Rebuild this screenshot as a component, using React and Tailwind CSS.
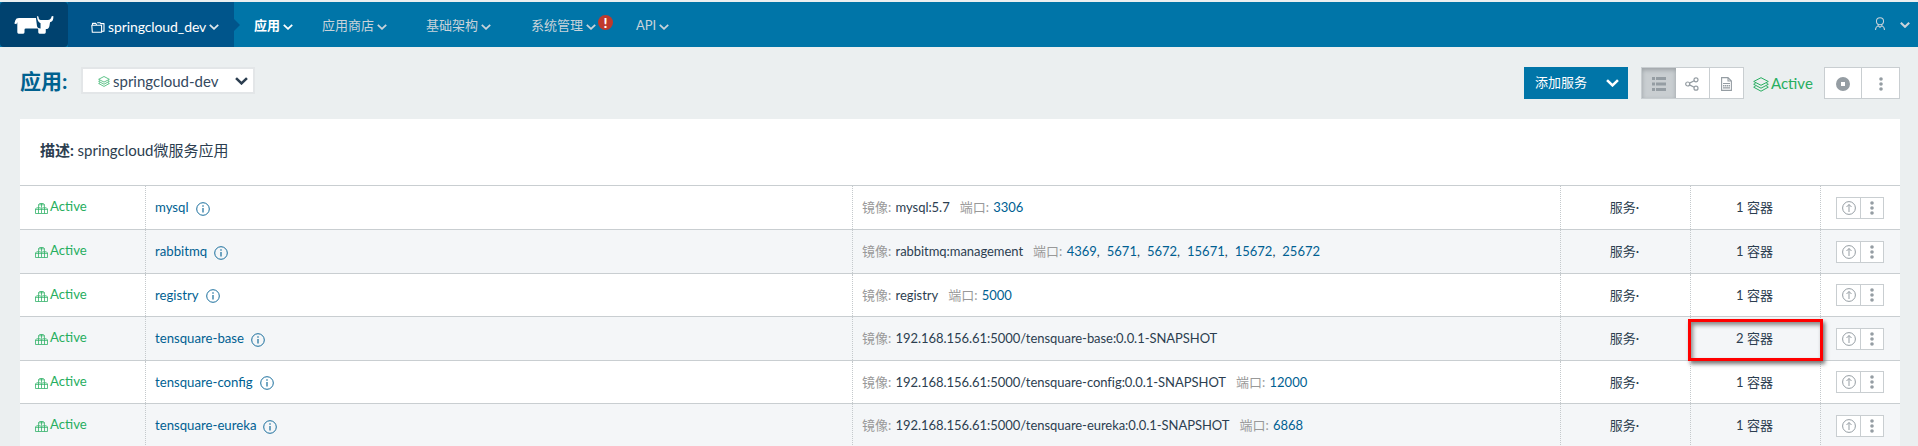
const UI = "font-['Lato','Noto_Sans_CJK_SC',sans-serif]";

const rows = [
  { name: "mysql", image: "mysql:5.7", ports: ["3306"], count: 1, h: "h-[44px]" },
  { name: "rabbitmq", image: "rabbitmq:management", ports: ["4369", "5671", "5672", "15671", "15672", "25672"], count: 1, h: "h-[44px]" },
  { name: "registry", image: "registry", ports: ["5000"], count: 1, h: "h-[43px]" },
  { name: "tensquare-base", image: "192.168.156.61:5000/tensquare-base:0.0.1-SNAPSHOT", ports: [], count: 2, h: "h-[44px]" },
  { name: "tensquare-config", image: "192.168.156.61:5000/tensquare-config:0.0.1-SNAPSHOT", ports: ["12000"], count: 1, h: "h-[43px]" },
  { name: "tensquare-eureka", image: "192.168.156.61:5000/tensquare-eureka:0.0.1-SNAPSHOT", ports: ["6868"], count: 1, h: "h-[44px]" },
];

function Chevron({ className, width = 1.8 }) {
  return (
    <svg viewBox="0 0 10 6" className={className} fill="none" stroke="currentColor" strokeWidth={width}>
      <path d="M0.8 0.8 5 4.8 9.2 0.8" />
    </svg>
  );
}

function Cow() {
  return (
    <svg viewBox="0 0 120 55" className="h-[18px] w-[40px]" fill="#fff">
      <path d="M66 6H14Q5 6 3 13L0 23 6 25 9 19V50Q9 54 13 54H27Q31 54 31 50V42Q31 38 35 38H70Q73 38 73 42V50Q73 54 77 54H92Q96 54 96 50V38H80Q70 38 69 30Z" />
      <path d="M69 0 74 2Q73 11 81 12H102Q112 12 114 1L119 0Q121 16 109 19L107 31Q105 40 96 40H80V22Q70 18 69 0Z" />
    </svg>
  );
}

function Layers({ className }) {
  return (
    <svg viewBox="0 0 16 15" className={className} fill="none" stroke="currentColor" strokeWidth="1" strokeLinejoin="round">
      <path d="M8 .7 15.3 4.5 8 8.3 .7 4.5Z" />
      <path d="M2.6 6.2.7 7.3 8 11.2 15.3 7.3 13.4 6.2" />
      <path d="M2.6 9.1.7 10.2 8 14.2 15.3 10.2 13.4 9.1" />
    </svg>
  );
}

function Cubes() {
  return (
    <svg viewBox="0 0 13 11" className="mt-[2px] h-[11px] w-[13px]" fill="none" stroke="currentColor" strokeWidth="0.75" strokeLinejoin="round">
      <path d="M3.6 4.8V1.6L4.6.5H8.4L9.4 1.6V4.8M3.6 1.8H9.4M6.5.5V4.8" />
      <path d="M.5 6 1.6 4.8H5.5L6.5 6V10.5H.5ZM6.5 6 7.5 4.8H11.4L12.5 6V10.5H6.5M.5 6.4H12.5M3.5 4.8V10.5M9.5 4.8V10.5" />
    </svg>
  );
}

function Dots({ className }) {
  return (
    <svg viewBox="0 0 4 14" className={className} fill="currentColor">
      <circle cx="2" cy="2" r="1.8" />
      <circle cx="2" cy="7" r="1.8" />
      <circle cx="2" cy="12" r="1.8" />
    </svg>
  );
}

function NavItem({ label, className, badge }) {
  return (
    <div className={`relative flex shrink-0 items-center ${className}`}>
      <span>{label}</span>
      <Chevron className="ml-[3px] mt-[3px] h-[6px] w-[10px]" />
      {badge && (
        <span className="absolute left-[67px] top-0 flex h-[15px] w-[15px] items-center justify-center rounded-full bg-[#c0392b] text-[14px] font-black leading-none text-white">!</span>
      )}
    </div>
  );
}

function Header() {
  return (
    <header className="flex h-[47px] shrink-0 border-t-2 border-[#ebeff0] bg-[#0075a8] text-[13px] leading-[20px] text-[#c9d3da]">
      <div className="flex w-[68px] shrink-0 items-start rounded-sm bg-[#00426f] pl-[14px] pt-[14px]">
        <Cow />
      </div>
      <div className="flex w-[166px] shrink-0 items-center bg-[#00558b] pl-[23px] pt-[5px] text-white">
        <svg viewBox="0 0 14 11" className="h-[11px] w-[14px]" fill="none" stroke="#fff" strokeWidth="1.1" strokeLinejoin="round">
          <path d="M.8 3.2H10.6V10.3H1.3ZM1.5 3V1.4H4.8L5.6 2.8" />
          <path d="M6.2 .7H9.2L9.8 1.6H13V9.2H11" />
        </svg>
        <span className="ml-[3px] text-[14px] tracking-[-0.1px]">springcloud_dev</span>
        <Chevron className="ml-[3px] h-[6px] w-[10px] text-[#dfe7ec]" />
      </div>
      <svg viewBox="0 0 6 12" className="mt-[17px] h-[12px] w-[6px] shrink-0" fill="#00558b">
        <path d="M0 0 6 6 0 12Z" />
      </svg>
      <nav className="flex grow items-start pt-[13px]">
        <NavItem label="应用" className="ml-[14px] w-[68px] font-bold text-white" />
        <NavItem label="应用商店" className="w-[104px]" />
        <NavItem label="基础架构" className="w-[105px]" />
        <NavItem label="系统管理" className="w-[105px]" badge />
        <NavItem label="API" className="" />
      </nav>
      <div className="flex items-start pr-[8px] pt-[15px]">
        <svg viewBox="0 0 12 15" className="mr-[14px] h-[14px] w-[12px]" fill="none" stroke="currentColor" strokeWidth="1.1">
          <circle cx="6" cy="4.6" r="3.8" />
          <path d="M4 8V9.5Q1.2 10.5 1.2 14M8 8V9.5Q10.8 10.5 10.8 14M4 9.5 6 11 8 9.5" />
        </svg>
        <Chevron className="mt-[5px] h-[6px] w-[10px]" width={2.1} />
      </div>
    </header>
  );
}

function Toolbar() {
  return (
    <div className="flex h-[72px] shrink-0 items-start pl-[20px] pr-[18px]">
      <h1 className="mt-[19px] w-[61px] text-[21px] font-bold leading-[30px] text-[#00618f]">应用:</h1>
      <div className="mt-[20px] flex h-[27px] w-[174px] items-center border-2 border-[#e3e6e8] bg-white pl-[15px] text-[#34495e]">
        <Layers className="mt-[2px] h-[11px] w-[12px] text-[#27ae60]" />
        <span className="ml-[3px] w-[122px] text-[15px] leading-[20px]">springcloud-dev</span>
        <Chevron className="h-[8px] w-[13px] shrink-0 text-[#2c3e50]" width={2} />
      </div>
      <div className="mt-[20px] ml-auto flex h-[32px] w-[104px] items-center bg-[#0075a8] pl-[11px] text-[13px] text-white">
        <span className="w-[71px]">添加服务</span>
        <Chevron className="h-[8px] w-[13px]" width={2} />
      </div>
      <div className="mt-[20px] ml-[13px] flex h-[32px] border border-[#c9ced1] bg-white text-[#959da3]">
        <div className="flex w-[34px] items-center justify-center bg-[#c9ced1] pt-[1px] shadow-[inset_0_2px_4px_#9ba1a5]">
          <svg viewBox="0 0 14 14" className="h-[14px] w-[14px]" fill="currentColor">
            <path d="M0 0H3V3H0ZM4 0H14V3H4ZM0 5.5H3V8.5H0ZM4 5.5H14V8.5H4ZM0 11H3V14H0ZM4 11H14V14H4Z" />
          </svg>
        </div>
        <div className="flex w-[34px] items-center justify-center border-r border-[#c9ced1] pr-[1px] pt-[1px]">
          <svg viewBox="0 0 14 14" className="h-[14px] w-[14px]" fill="none" stroke="currentColor" strokeWidth="1.2">
            <circle cx="2.7" cy="7" r="2" />
            <circle cx="11" cy="2.8" r="2" />
            <circle cx="11" cy="11.2" r="2" />
            <path d="M4.5 6.1 9.2 3.7M4.5 7.9 9.2 10.3" />
          </svg>
        </div>
        <div className="flex w-[33px] items-center justify-center pr-[1px] pt-[1px]">
          <svg viewBox="0 0 11 14" className="h-[14px] w-[11px]" fill="none" stroke="currentColor" strokeWidth="1.1">
            <path d="M.6.6H7L10.4 4V13.4H.6ZM7 .6V4H10.4M2 6.5H9M2 10.9H9" />
            <path d="M2 8.7H9" strokeWidth="1.6" strokeDasharray="1.4 .5" />
          </svg>
        </div>
      </div>
      <div className="mt-[20px] ml-[9px] flex h-[32px] w-[71px] items-center text-[15px] text-[#27ae60]">
        <Layers className="mt-[2px] h-[15px] w-[16px] shrink-0" />
        <span className="ml-[2px]">Active</span>
      </div>
      <div className="mt-[20px] flex h-[32px] border border-[#c9ced1] bg-white text-[#959da3]">
        <div className="flex w-[37px] items-center justify-center border-r border-[#c9ced1] pt-[2px]">
          <svg viewBox="0 0 14 14" className="h-[14px] w-[14px]" fill="currentColor">
            <path fillRule="evenodd" d="M7 0A7 7 0 1 1 7 14A7 7 0 1 1 7 0ZM5 5V9H9V5Z" />
          </svg>
        </div>
        <div className="flex w-[37px] items-center justify-center pt-[1px]">
          <Dots className="h-[14px] w-[4px]" />
        </div>
      </div>
    </div>
  );
}

function Row({ row, index }) {
  const cell = "border-l border-dotted border-[#c4c9cc] flex items-center";
  return (
    <div className={`grid grid-cols-[125px_707px_708px_130px_130px_80px] border-t border-[#c9ced1] ${row.h} ${index % 2 ? "bg-[#f4f6f8]" : "bg-white"}`}>
      <div className="flex items-center pl-[15px] text-[#27ae60]">
        <Cubes />
        <span className="ml-[2px] pb-[1px] text-[13.2px]">Active</span>
      </div>
      <div className={`${cell} pl-[9px] pt-[1px] text-[#005f92]`}>
        <span className="text-[13.2px]">{row.name}</span>
        <svg viewBox="0 0 14 14" className="ml-[7px] mt-[1px] h-[14px] w-[14px]" fill="none" stroke="currentColor" strokeWidth="0.9">
          <circle cx="7" cy="7" r="6.3" />
          <path d="M7 3.3V4.8M7 6V10.5" strokeWidth="1.1" />
        </svg>
      </div>
      <div className={`${cell} whitespace-pre pl-[9px] pt-[1px]`}>
        <span className="mr-[1px] text-[#999]">镜像: </span>
        <span className="tracking-[-0.05px]">{row.image}</span>
        {row.ports.length > 0 && (
          <>
            <span className="ml-[10px] mr-[1px] text-[#999]">端口: </span>
            {row.ports.map((port, i) => (
              <span key={port} className={i < row.ports.length - 1 ? "mr-[7px]" : ""}>
                <span className="text-[#005f92]">{port}</span>
                {i < row.ports.length - 1 && ","}
              </span>
            ))}
          </>
        )}
      </div>
      <div className={`${cell} justify-center pr-[2px] pt-[1px]`}>服务·</div>
      <div className={`${cell} relative justify-center pr-[2px] pt-[1px]`}>
        <span>{row.count} 容器</span>
        {row.count === 2 && (
          <div className="absolute left-[-3px] top-[2px] h-[42px] w-[135px] border-3 border-[#f00] shadow-[2px_3px_4px_#777,inset_2px_3px_4px_#888]" />
        )}
      </div>
      <div className={`${cell} pl-[15px] text-[#959da3]`}>
        <div className="flex h-[22px] w-[48px] border border-[#c9ced1] bg-white">
          <div className="flex w-[24px] items-center justify-center border-r border-[#c9ced1]">
            <svg viewBox="0 0 14 14" className="h-[14px] w-[14px]" fill="none" stroke="currentColor" strokeWidth="1">
              <circle cx="7" cy="7" r="6.4" />
              <path d="M7 11V3.5M4.5 6 7 3.5 9.5 6" />
            </svg>
          </div>
          <div className="flex grow items-center justify-center">
            <Dots className="h-[14px] w-[4px]" />
          </div>
        </div>
      </div>
    </div>
  );
}

export default function App() {
  return (
    <div className={`flex h-[446px] w-[1918px] flex-col overflow-hidden bg-[#ebeff0] text-[14px] text-[#2c3e50] ${UI}`}>
      <Header />
      <Toolbar />
      <main className="ml-[20px] w-[1880px]">
        <section className="flex h-[66px] items-start bg-white pl-[20px] pt-[20px] text-[15px] leading-[22px]">
          <span className="whitespace-pre font-bold">描述: </span>
          <span>springcloud微服务应用</span>
        </section>
        <div className="text-[13px]">
          {rows.map((row, index) => (
            <Row key={row.name} row={row} index={index} />
          ))}
        </div>
      </main>
    </div>
  );
}
